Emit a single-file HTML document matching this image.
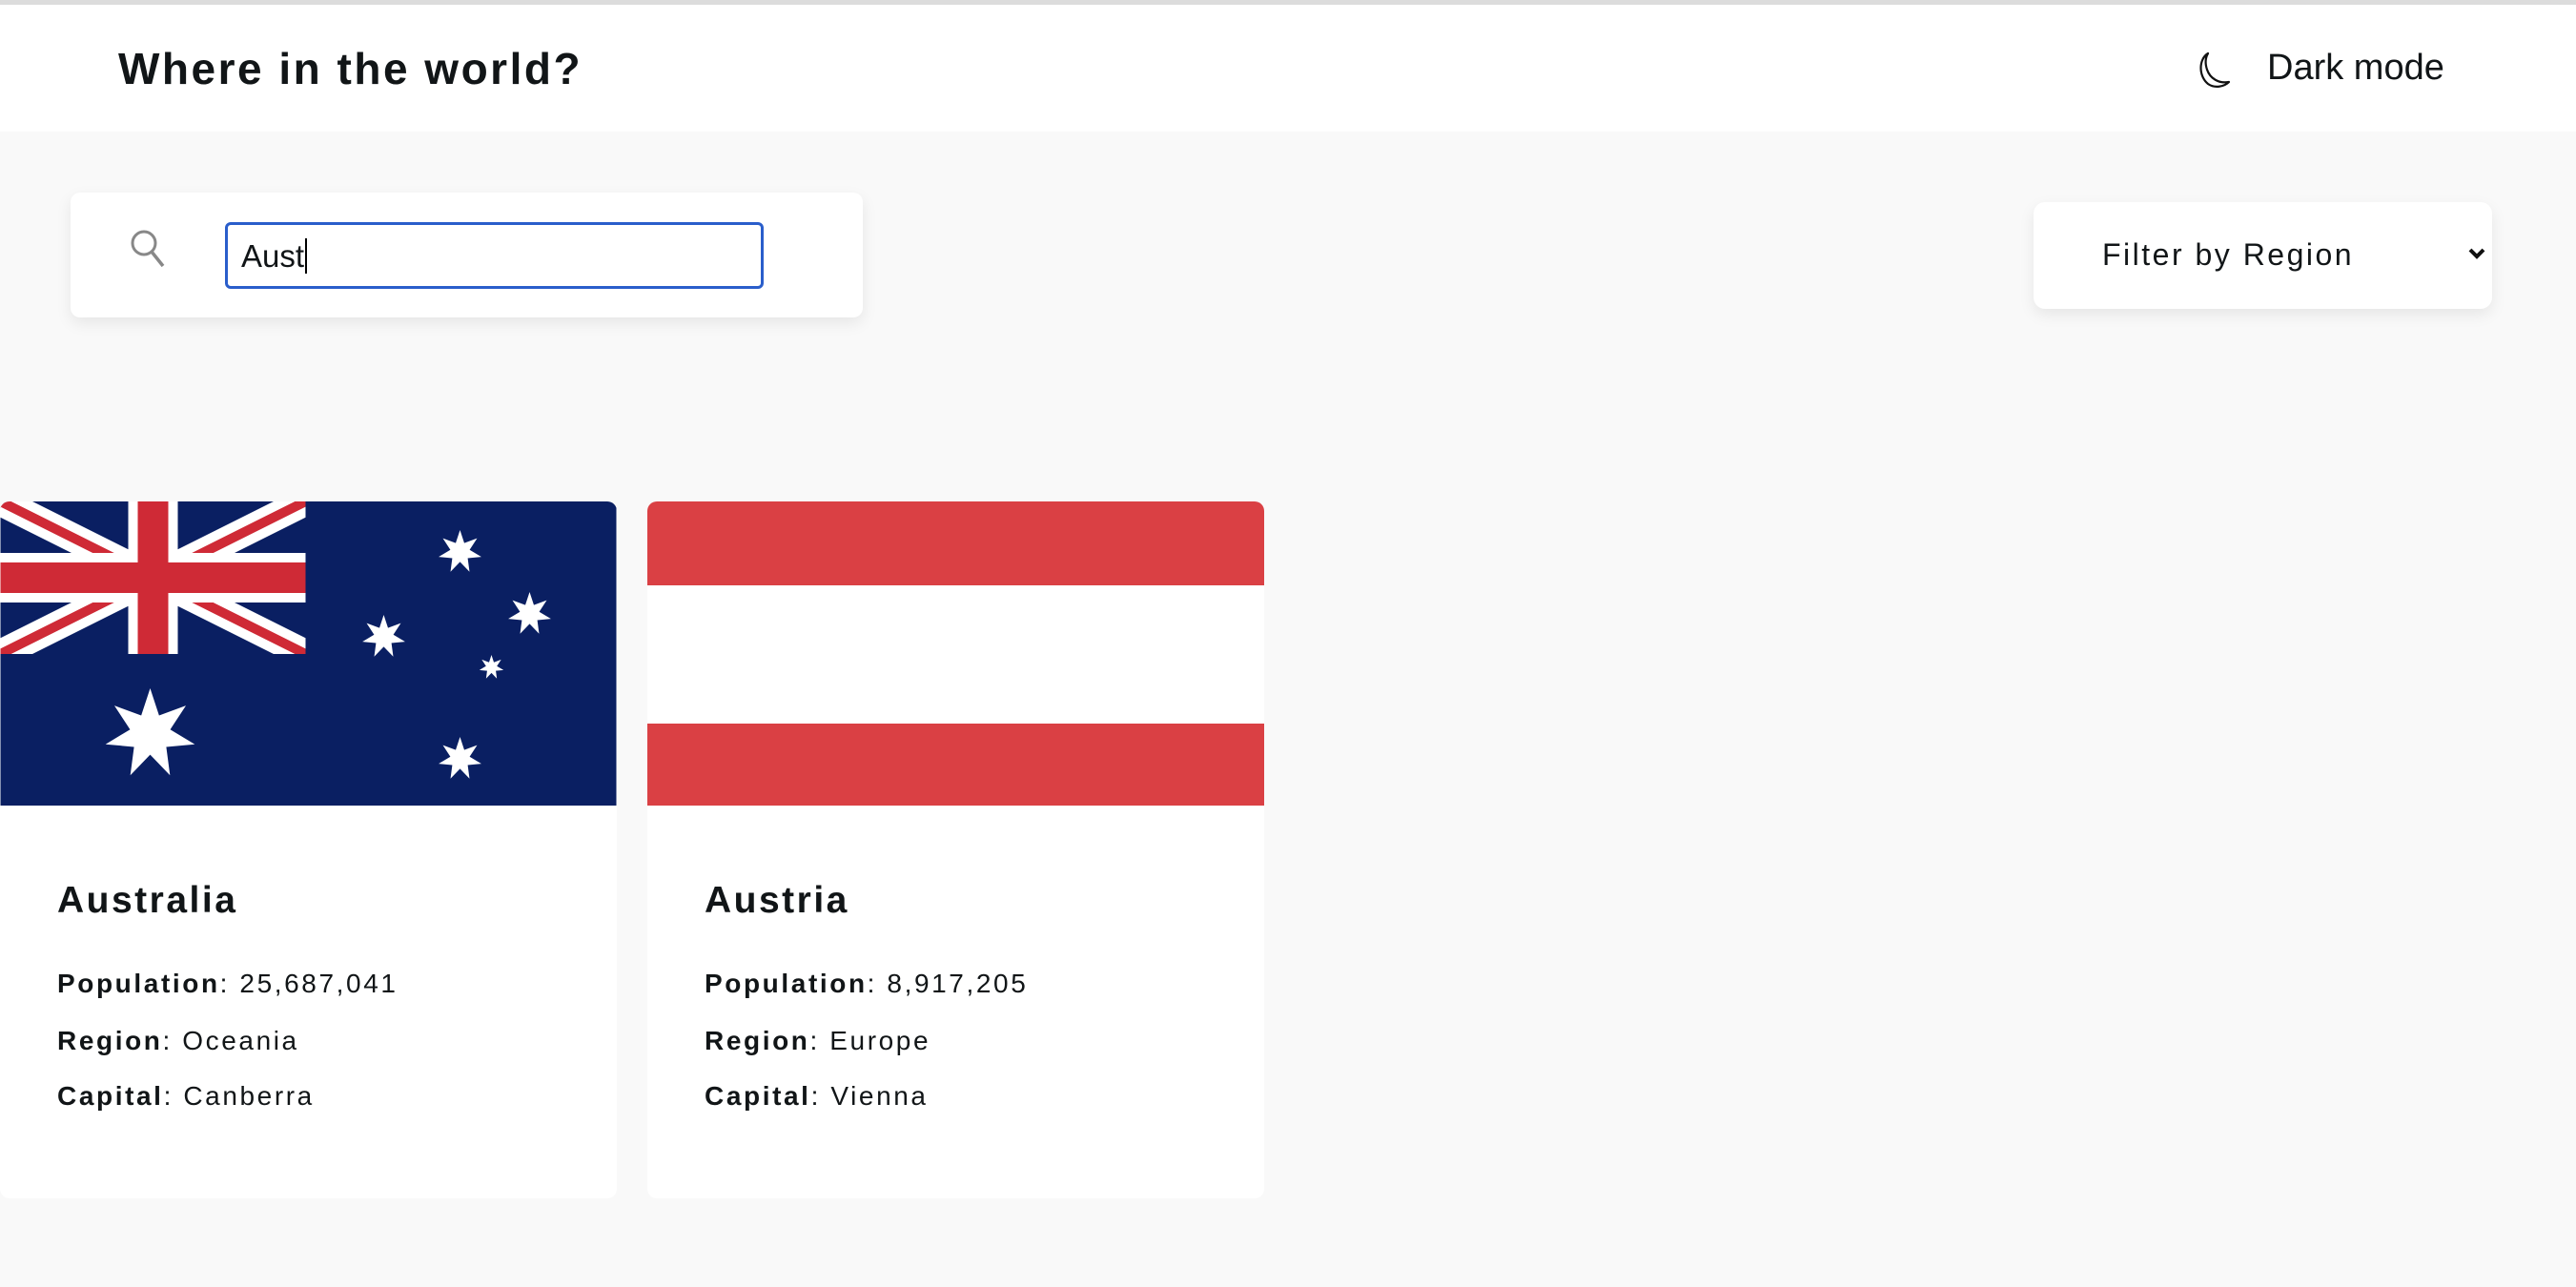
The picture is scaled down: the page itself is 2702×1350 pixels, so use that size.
<!DOCTYPE html>
<html><head><meta charset="utf-8"><style>
*{margin:0;padding:0;box-sizing:border-box}
body{width:2702px;height:1350px;background:#f9f9f9;font-family:"Liberation Sans",sans-serif;color:#111517;position:relative;overflow:hidden}
.top{position:absolute;left:0;top:0;width:2702px;height:5px;background:#dcdcdc}
header{position:absolute;left:0;top:5px;width:2702px;height:133px;background:#fff}
h1{position:absolute;left:124px;top:40px;font-size:46px;font-weight:bold;letter-spacing:2.5px}
.dm{position:absolute;left:2378px;top:45px;font-size:38px}
.moon{position:absolute;left:2303px;top:48px}
.search{position:absolute;left:74px;top:202px;width:831px;height:131px;background:#fff;border-radius:10px;box-shadow:0 6px 16px rgba(0,0,0,.08)}
.inp{position:absolute;left:162px;top:31px;width:565px;height:70px;border:3px solid #2a5ecb;border-radius:6px;font-size:33px;padding:14px 0 0 14px}
.inp span{border-right:2px solid #000;padding-right:1px}
.filter{position:absolute;left:2133px;top:212px;width:481px;height:112px;background:#fff;border-radius:12px;box-shadow:0 6px 16px rgba(0,0,0,.08)}
.filter .t{position:absolute;left:72px;top:37px;font-size:32px;letter-spacing:2.5px}
.card{position:absolute;top:526px;width:647px;height:731px;background:#fff;border-radius:10px;overflow:hidden}
.card svg{display:block}
.name{position:absolute;left:60px;top:397px;font-size:39px;font-weight:bold;letter-spacing:2.5px}
.ln{position:absolute;left:60px;font-size:28px;letter-spacing:2.6px}
.ln b{font-weight:bold}
</style></head><body>
<div class="top"></div>
<header><h1>Where in the world?</h1>
<svg class="moon" width="40" height="44" viewBox="0 0 40 44"><path d="M13 3 C3 9 3 27 13 35 C20 40 30 38 35 33 C24 35 15 29 12 20 C10 14 10 8 13 3Z" fill="none" stroke="#111" stroke-width="2.2" stroke-linejoin="round"/></svg>
<div class="dm">Dark mode</div></header>
<div class="search">
<svg style="position:absolute;left:62px;top:38px" width="40" height="42" viewBox="0 0 40 42"><circle cx="15" cy="15" r="12" fill="none" stroke="#888" stroke-width="3"/><path d="M23 24 L35 39" stroke="#888" stroke-width="3.5"/></svg>
<div class="inp"><span>Aust</span></div></div>
<div class="filter"><div class="t">Filter by Region</div>
<svg style="position:absolute;left:455px;top:46px" width="20" height="16" viewBox="0 0 20 16"><path d="M3 4 L10 11 L17 4" fill="none" stroke="#111" stroke-width="4"/></svg></div>

<svg width="0" height="0" style="position:absolute"><defs><polygon id="st" points="0,-1 0.195,-0.405 0.782,-0.623 0.439,-0.1 0.975,0.223 0.352,0.28 0.434,0.901 0,0.45 -0.434,0.901 -0.352,0.28 -0.975,0.223 -0.439,-0.1 -0.782,-0.623 -0.195,-0.405" fill="#fff"/><clipPath id="cc"><rect width="320" height="160"/></clipPath></defs></svg>

<div class="card" style="left:0">
<svg width="647" height="319" viewBox="0 0 646 319">
<rect width="646" height="319" fill="#0a1f62"/>
<g clip-path="url(#cc)">
<path d="M0 0 L320 160 M320 0 L0 160" stroke="#fff" stroke-width="30"/>
<path d="M0 0 L320 160 M320 0 L0 160" stroke="#cf2a36" stroke-width="10"/>
</g>
<rect x="0" y="54" width="320" height="52" fill="#fff"/><rect x="134" y="0" width="52" height="160" fill="#fff"/>
<rect x="0" y="64" width="320" height="32" fill="#cf2a36"/><rect x="144" y="0" width="32" height="160" fill="#cf2a36"/>
<use href="#st" transform="translate(157,244) scale(48)"/>
<use href="#st" transform="translate(482,53) scale(23)"/>
<use href="#st" transform="translate(555,118) scale(23)"/>
<use href="#st" transform="translate(402,142) scale(23)"/>
<use href="#st" transform="translate(515,174) scale(13)"/>
<use href="#st" transform="translate(482,270) scale(23)"/>
</svg>
<div class="name">Australia</div>
<div class="ln" style="top:490px"><b>Population</b>: 25,687,041</div>
<div class="ln" style="top:550px"><b>Region</b>: Oceania</div>
<div class="ln" style="top:608px"><b>Capital</b>: Canberra</div>
</div>

<div class="card" style="left:679px">
<svg width="647" height="319" viewBox="0 0 647 319"><rect width="647" height="319" fill="#da4044"/><rect y="88" width="647" height="145" fill="#fff"/></svg>
<div class="name">Austria</div>
<div class="ln" style="top:490px"><b>Population</b>: 8,917,205</div>
<div class="ln" style="top:550px"><b>Region</b>: Europe</div>
<div class="ln" style="top:608px"><b>Capital</b>: Vienna</div>
</div>
</body></html>
